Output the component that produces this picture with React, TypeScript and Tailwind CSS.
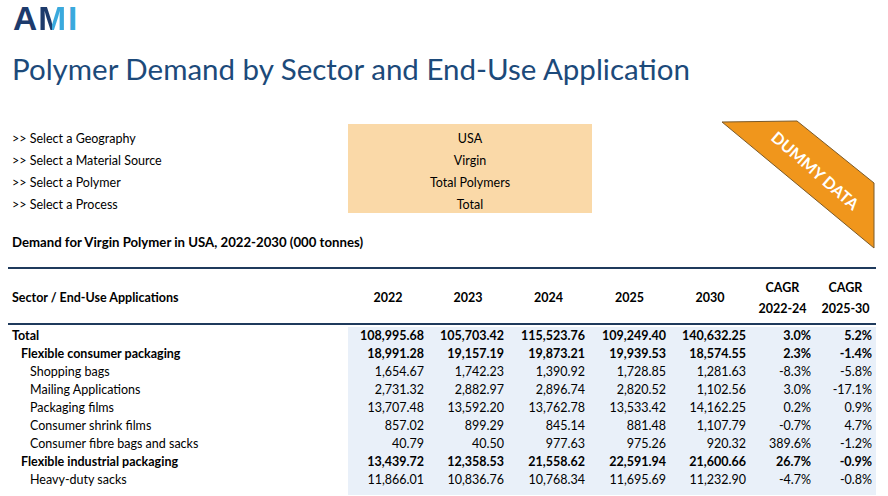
import React from "react";

const rows: { label: string; level: 0 | 1 | 2; v: string[] }[] = [
  { label: "Total", level: 0, v: ["108,995.68", "105,703.42", "115,523.76", "109,249.40", "140,632.25", "3.0%", "5.2%"] },
  { label: "Flexible consumer packaging", level: 1, v: ["18,991.28", "19,157.19", "19,873.21", "19,939.53", "18,574.55", "2.3%", "-1.4%"] },
  { label: "Shopping bags", level: 2, v: ["1,654.67", "1,742.23", "1,390.92", "1,728.85", "1,281.63", "-8.3%", "-5.8%"] },
  { label: "Mailing Applications", level: 2, v: ["2,731.32", "2,882.97", "2,896.74", "2,820.52", "1,102.56", "3.0%", "-17.1%"] },
  { label: "Packaging films", level: 2, v: ["13,707.48", "13,592.20", "13,762.78", "13,533.42", "14,162.25", "0.2%", "0.9%"] },
  { label: "Consumer shrink films", level: 2, v: ["857.02", "899.29", "845.14", "881.48", "1,107.79", "-0.7%", "4.7%"] },
  { label: "Consumer fibre bags and sacks", level: 2, v: ["40.79", "40.50", "977.63", "975.26", "920.32", "389.6%", "-1.2%"] },
  { label: "Flexible industrial packaging", level: 1, v: ["13,439.72", "12,358.53", "21,558.62", "22,591.94", "21,600.66", "26.7%", "-0.9%"] },
  { label: "Heavy-duty sacks", level: 2, v: ["11,866.01", "10,836.76", "10,768.34", "11,695.69", "11,232.90", "-4.7%", "-0.8%"] },
];

const colW = ["w-[80px]", "w-[80px]", "w-[81px]", "w-[81px]", "w-[80px]", "w-[65px]", "w-[61px]"];

export default function App() {
  return (
    <div className="relative w-[888px] h-[496px] overflow-hidden bg-white font-['Lato',sans-serif] text-black">
      {/* Logo */}
      <div className="h-[36px] pl-[13px] flex items-start font-['Liberation_Sans',sans-serif] text-[33.5px] leading-[38px] font-bold">
        <span className="text-[#1d3b6c]">A</span>
        <span className="ml-[1px] bg-[linear-gradient(90deg,#1d3b6c_50%,#3aa9dd_50%)] bg-clip-text text-transparent">M</span>
        <span className="ml-[2px] text-[#3aa9dd]">I</span>
      </div>

      {/* Title */}
      <div className="h-[76px] pl-[12px] pt-[16px] text-[29.5px] leading-[34px] text-[#1c4a7a]">
        Polymer Demand by Sector and End-Use Application
      </div>

      {/* Selectors */}
      <div className="mt-[12px] flex text-[12.5px]">
        <div className="w-[348px] pl-[12px] pt-[4px]">
          {["Select a Geography", "Select a Material Source", "Select a Polymer", "Select a Process"].map((t) => (
            <div key={t} className="h-[22px] flex items-center">
              {">> "}
              {t}
            </div>
          ))}
        </div>
        <div className="w-[244px] h-[89px] bg-[#fad9a8] pt-[4px]">
          {["USA", "Virgin", "Total Polymers", "Total"].map((t) => (
            <div key={t} className="h-[22px] flex items-center justify-center">
              {t}
            </div>
          ))}
        </div>
      </div>

      {/* Heading */}
      <div className="mt-[17px] pl-[12px] h-[20px] flex items-center text-[13.2px] font-bold">
        Demand for Virgin Polymer in USA, 2022-2030 (000 tonnes)
      </div>

      {/* Table */}
      <div className="mt-[14px] ml-[8px] w-[868px] text-[12.5px]">
        <div className="border-t-2 border-b-2 border-[#1f3a5c] h-[58px] pt-[4px] flex items-center font-bold">
          <div className="w-[340px] pl-[4px]">Sector / End-Use Applications</div>
          {["2022", "2023", "2024", "2025", "2030"].map((y, i) => (
            <div key={y} className={`${colW[i]} text-center`}>
              {y}
            </div>
          ))}
          <div className={`${colW[5]} text-center leading-[21px]`}>
            CAGR
            <br />
            2022-24
          </div>
          <div className={`${colW[6]} text-center leading-[21px]`}>
            CAGR
            <br />
            2025-30
          </div>
        </div>
        <div className="h-[2px]" />
        {rows.map((r) => (
          <div key={r.label} className={`flex h-[18px] ${r.level < 2 ? "font-bold" : ""}`}>
            <div
              className={`w-[340px] flex items-center ${
                r.level === 0 ? "pl-[4px]" : r.level === 1 ? "pl-[13px]" : "pl-[22px]"
              }`}
            >
              {r.label}
            </div>
            <div className="flex bg-[#e9f0f9]">
              {r.v.map((v, i) => (
                <div key={i} className={`${colW[i]} flex items-center justify-end pr-[4px]`}>
                  {v}
                </div>
              ))}
            </div>
          </div>
        ))}
        <div className="flex h-[6px]">
          <div className="w-[340px]" />
          <div className="w-[528px] bg-[#e9f0f9]" />
        </div>
      </div>

      {/* Dummy data banner */}
      <svg className="absolute left-0 top-0" width="888" height="496" viewBox="0 0 888 496">
        <polygon points="722,122 797,121 874,183 874,248" fill="#f0961c" stroke="#7a5a2a" strokeWidth="1" />
        <text
          x="0"
          y="0"
          transform="translate(814,172) rotate(41)"
          textAnchor="middle"
          dominantBaseline="middle"
          fill="#ffffff"
          fontFamily="Lato, sans-serif"
          fontWeight="700"
          fontSize="16"
        >
          DUMMY DATA
        </text>
      </svg>
    </div>
  );
}
